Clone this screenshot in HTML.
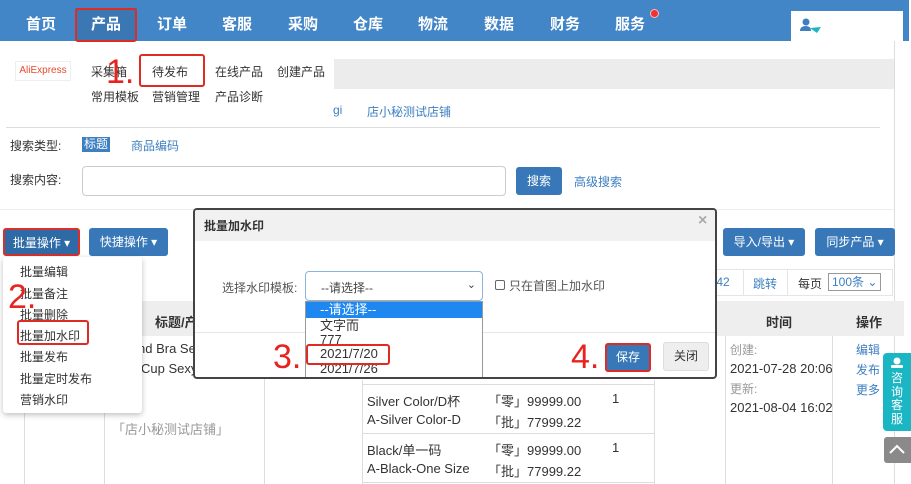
<!DOCTYPE html>
<html><head><meta charset="utf-8"><style>
*{margin:0;padding:0;box-sizing:border-box}
body{width:911px;height:484px;overflow:hidden;background:#fff;position:relative;font-family:"Liberation Sans","Noto Sans CJK SC",sans-serif;font-size:12px;color:#333}
.a{position:absolute;white-space:nowrap}
.nav{left:0;top:0;width:909px;height:41px;background:#4286c7}
.ni{top:13px;color:#fff;font-weight:bold;font-size:15px}
.blue{color:#3d7fc1}
.btn{position:absolute;background:#3878b8;color:#fff;border-radius:3px;text-align:center;font-size:12px}
.red{color:#e8231f;font-size:34px;line-height:34px;font-family:"Liberation Sans",sans-serif}
.rb{position:absolute;border:2px solid #e02a24;border-radius:3px}
.vl{position:absolute;width:1px;background:#ddd}
.hl{position:absolute;height:1px;background:#ddd}
</style></head><body>
<div class="a nav"></div>
<div class="a" style="left:75px;top:8px;width:62px;height:33px;background:#3a77b3"></div>
<div class="a ni" style="left:26px">首页</div>
<div class="a ni" style="left:91px">产品</div>
<div class="a ni" style="left:157px">订单</div>
<div class="a ni" style="left:222px">客服</div>
<div class="a ni" style="left:288px">采购</div>
<div class="a ni" style="left:353px">仓库</div>
<div class="a ni" style="left:418px">物流</div>
<div class="a ni" style="left:484px">数据</div>
<div class="a ni" style="left:550px">财务</div>
<div class="a ni" style="left:615px">服务</div>
<div class="a" style="left:651px;top:10px;width:7px;height:7px;border-radius:50%;background:#e33;box-shadow:0 0 0 1px #fbb"></div>
<div class="rb" style="left:75px;top:8px;width:62px;height:34px"></div>
<div class="a" style="left:791px;top:11px;width:112px;height:30px;background:#fff"></div>
<svg class="a" style="left:799px;top:18px" width="24" height="16"><circle cx="7" cy="4" r="3.5" fill="#3d7fc1"/><path d="M1 13 Q1 8 7 8 Q12 8 12 13Z" fill="#3d7fc1"/><path d="M11 10 L22 9 L18 15Z" fill="#1ab6c4"/></svg>

<div class="a" style="left:15px;top:61px;width:56px;height:20px;border:1px solid #eee;font-size:10px;line-height:18px;text-align:center;color:#e8492c">AliExpress</div>
<div class="a" style="left:334px;top:59px;width:561px;height:30px;background:#ececec"></div>
<div class="a" style="left:91px;top:63px">采集箱</div>
<div class="a" style="left:152px;top:63px">待发布</div>
<div class="a" style="left:215px;top:63px">在线产品</div>
<div class="a" style="left:277px;top:63px">创建产品</div>
<div class="a" style="left:91px;top:88px">常用模板</div>
<div class="a" style="left:152px;top:88px">营销管理</div>
<div class="a" style="left:215px;top:88px">产品诊断</div>
<div class="a blue" style="left:333px;top:103px">gi</div>
<div class="a blue" style="left:367px;top:103px">店小秘测试店铺</div>
<div class="rb" style="left:139px;top:54px;width:66px;height:33px"></div>
<div class="a red" style="left:106px;top:55px">1.</div>
<div class="hl" style="left:6px;top:127px;width:874px"></div>
<div class="vl" style="left:894px;top:41px;height:443px"></div>

<div class="a" style="left:10px;top:137px">搜索类型:</div>
<div class="a" style="left:82px;top:137px;width:28px;height:15px;background:#3d7fc1;color:#fff;line-height:15px;text-align:center">标题</div>
<div class="a blue" style="left:131px;top:137px">商品编码</div>
<div class="a" style="left:10px;top:171px">搜索内容:</div>
<div class="a" style="left:82px;top:166px;width:424px;height:30px;border:1px solid #ccc;border-radius:4px"></div>
<div class="btn" style="left:516px;top:167px;width:46px;height:28px;line-height:28px">搜索</div>
<div class="a blue" style="left:574px;top:173px">高级搜索</div>
<div class="hl" style="left:0;top:209px;width:894px;background:#eee"></div>

<div class="btn" style="left:3px;top:228px;width:77px;height:28px;line-height:26px;background:#2d6aa6;border:2px solid #d9302a">批量操作 ▾</div>
<div class="btn" style="left:89px;top:228px;width:79px;height:28px;line-height:28px">快捷操作 ▾</div>
<div class="btn" style="left:723px;top:228px;width:82px;height:28px;line-height:28px">导入/导出 ▾</div>
<div class="btn" style="left:815px;top:228px;width:80px;height:28px;line-height:28px">同步产品 ▾</div>

<div class="a" style="left:700px;top:269px;width:193px;height:27px;border:1px solid #e5e5e5"></div>
<div class="a blue" style="left:713px;top:275px">/42</div>
<div class="vl" style="left:743px;top:269px;height:27px;background:#e5e5e5"></div>
<div class="a blue" style="left:753px;top:275px">跳转</div>
<div class="vl" style="left:787px;top:269px;height:27px;background:#e5e5e5"></div>
<div class="a" style="left:798px;top:275px">每页</div>
<div class="a blue" style="left:828px;top:273px;width:53px;height:18px;border:1px solid #999;line-height:16px;padding-left:3px">100条 ⌄</div>

<div class="a" style="left:24px;top:301px;width:880px;height:35px;background:#eee"></div>
<div class="a" style="left:155px;top:312px;font-weight:bold;font-size:13px">标题/产品</div>
<div class="a" style="left:766px;top:312px;font-weight:bold;font-size:13px">时间</div>
<div class="a" style="left:856px;top:312px;font-weight:bold;font-size:13px">操作</div>
<div class="vl" style="left:24px;top:336px;height:148px"></div>
<div class="vl" style="left:104px;top:336px;height:148px"></div>
<div class="vl" style="left:264px;top:336px;height:148px"></div>
<div class="vl" style="left:362px;top:380px;height:104px"></div>
<div class="vl" style="left:654px;top:380px;height:104px"></div>
<div class="vl" style="left:725px;top:336px;height:148px"></div>
<div class="vl" style="left:832px;top:336px;height:148px"></div>
<div class="hl" style="left:362px;top:384px;width:292px"></div>
<div class="hl" style="left:362px;top:433px;width:292px"></div>
<div class="hl" style="left:362px;top:482px;width:292px"></div>
<div class="a" style="left:138px;top:341px;font-size:13px">nd Bra Se</div>
<div class="a" style="left:141px;top:361px;font-size:13px">Cup Sexy</div>
<div class="a" style="left:112px;top:419px;color:#999;font-size:13px">「店小秘测试店铺」</div>
<div class="a" style="left:367px;top:391px;font-size:13px">Silver Color/D杯</div>
<div class="a" style="left:367px;top:412px;font-size:13px">A-Silver Color-D</div>
<div class="a" style="left:367px;top:440px;font-size:13px">Black/单一码</div>
<div class="a" style="left:367px;top:461px;font-size:13px">A-Black-One Size</div>
<div class="a" style="left:488px;top:391px;font-size:13px">「零」99999.00</div>
<div class="a" style="left:488px;top:412px;font-size:13px">「批」77999.22</div>
<div class="a" style="left:488px;top:440px;font-size:13px">「零」99999.00</div>
<div class="a" style="left:488px;top:461px;font-size:13px">「批」77999.22</div>
<div class="a" style="left:612px;top:391px;font-size:13px">1</div>
<div class="a" style="left:612px;top:440px;font-size:13px">1</div>
<div class="a" style="left:730px;top:341px;color:#999">创建:</div>
<div class="a" style="left:730px;top:361px;font-size:13px">2021-07-28 20:06</div>
<div class="a" style="left:730px;top:380px;color:#999">更新:</div>
<div class="a" style="left:730px;top:400px;font-size:13px">2021-08-04 16:02</div>
<div class="a blue" style="left:856px;top:341px">编辑</div>
<div class="a blue" style="left:856px;top:361px">发布</div>
<div class="a blue" style="left:856px;top:381px">更多</div>

<div class="a" style="left:883px;top:353px;width:28px;height:78px;background:#1ab6c4;border-radius:4px 0 0 4px"></div>
<svg class="a" style="left:890px;top:357px" width="14" height="12"><circle cx="7" cy="4" r="3.5" fill="#fff"/><rect x="1" y="8" width="12" height="3" rx="1" fill="#fff"/></svg>
<div class="a" style="left:891px;top:372px;width:13px;color:#fff;font-size:12px;line-height:13.5px;white-space:normal">咨询客服</div>
<div class="a" style="left:884px;top:437px;width:27px;height:26px;background:#8a8a8a;border-radius:3px 0 0 3px"></div>
<svg class="a" style="left:888px;top:443px" width="18" height="12"><path d="M2 10 L9 3 L16 10" stroke="#fff" stroke-width="2" fill="none"/></svg>

<div class="a" style="left:3px;top:257px;width:139px;height:156px;background:#fff;box-shadow:0 2px 6px rgba(0,0,0,.25);border-radius:3px"></div>
<div class="a" style="left:20px;top:263px">批量编辑</div>
<div class="a" style="left:20px;top:285px">批量备注</div>
<div class="a" style="left:20px;top:306px">批量删除</div>
<div class="a" style="left:20px;top:327px">批量加水印</div>
<div class="a" style="left:20px;top:348px">批量发布</div>
<div class="a" style="left:20px;top:370px">批量定时发布</div>
<div class="a" style="left:20px;top:391px">营销水印</div>
<div class="rb" style="left:17px;top:320px;width:72px;height:25px"></div>
<div class="a red" style="left:8px;top:280px">2.</div>

<div class="a" style="left:193px;top:208px;width:524px;height:171px;background:#fff;border:2px solid #444;border-radius:4px;overflow:hidden">
 <div class="a" style="left:0;top:0;width:520px;height:31px;background:#f1f1f1"></div>
 <div class="a" style="left:9px;top:7px;font-weight:bold;font-size:12px">批量加水印</div>
 <div class="a" style="left:503px;top:2px;color:#aaa;font-size:16px;font-weight:bold">×</div>
 <div class="a" style="left:27px;top:69px;color:#555">选择水印模板:</div>
 <div class="a" style="left:110px;top:61px;width:178px;height:30px;border:1px solid #8ab4e0;border-radius:4px;padding:7px 0 0 15px;color:#444">--请选择--<span style="position:absolute;right:6px;top:6px;font-size:11px">⌄</span></div>
 <div class="a" style="left:300px;top:70px;width:10px;height:10px;border:1px solid #666;border-radius:2px"></div>
 <div class="a" style="left:314px;top:67px;color:#555">只在首图上加水印</div>
 <div class="hl" style="left:0;top:122px;width:520px;background:#e5e5e5"></div>
 <div class="a" style="left:110px;top:91px;width:178px;height:80px;background:#fff;border:1px solid #999;font-size:13px;line-height:15px">
  <div style="background:#1e88f0;color:#fff;padding-left:14px;height:16px">--请选择--</div>
  <div style="padding-left:14px">文字而</div>
  <div style="padding-left:14px;line-height:13px">777</div>
  <div style="padding-left:14px">2021/7/20</div>
  <div style="padding-left:14px">2021/7/26</div>
 </div>
 <div class="btn" style="left:410px;top:133px;width:46px;height:29px;line-height:25px;border:2px solid #e02a24">保存</div>
 <div class="a" style="left:468px;top:132px;width:46px;height:29px;background:#eee;border:1px solid #ddd;border-radius:3px;text-align:center;line-height:27px">关闭</div>
</div>
<div class="rb" style="left:306px;top:344px;width:84px;height:21px"></div>
<div class="a red" style="left:273px;top:340px">3.</div>
<div class="a red" style="left:571px;top:340px">4.</div>
</body></html>
